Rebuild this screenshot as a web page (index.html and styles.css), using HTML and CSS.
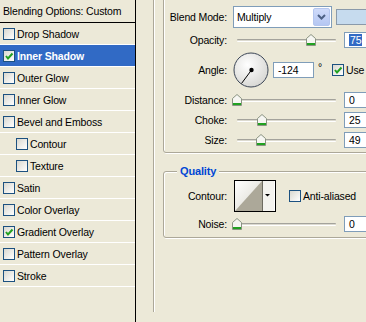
FILE: index.html
```html
<!DOCTYPE html>
<html>
<head>
<meta charset="utf-8">
<link rel="stylesheet" href="styles.css">
</head>
<body>
<div class="dialog">
  <aside class="styles-list">
    <div class="list-header">Blending Options: Custom</div>
    <div class="item"><span class="cb"></span>Drop Shadow</div>
    <div class="item selected"><span class="cb"><svg viewBox="0 0 10 10"><polyline points="2,5 4,7.5 8.5,2.5" fill="none" stroke="#21a121" stroke-width="2"/></svg></span>Inner Shadow</div>
    <div class="item"><span class="cb"></span>Outer Glow</div>
    <div class="item"><span class="cb"></span>Inner Glow</div>
    <div class="item"><span class="cb"></span>Bevel and Emboss</div>
    <div class="item sub"><span class="cb"></span>Contour</div>
    <div class="item sub"><span class="cb"></span>Texture</div>
    <div class="item"><span class="cb"></span>Satin</div>
    <div class="item"><span class="cb"></span>Color Overlay</div>
    <div class="item"><span class="cb"><svg viewBox="0 0 10 10"><polyline points="2,5 4,7.5 8.5,2.5" fill="none" stroke="#21a121" stroke-width="2"/></svg></span>Gradient Overlay</div>
    <div class="item"><span class="cb"></span>Pattern Overlay</div>
    <div class="item"><span class="cb"></span>Stroke</div>
  </aside>
  <main class="panel">
    <div class="outer-group">
      <section class="group structure">
        <div class="frow blend-row">
          <span class="lbl">Blend Mode:</span>
          <div class="select"><span>Multiply</span><span class="select-btn"><svg viewBox="0 0 15 16" width="15" height="16"><polyline points="4,6 7.5,9.5 11,6" fill="none" stroke="#4d6185" stroke-width="2"/></svg></span></div>
          <span class="swatch"></span>
        </div>
        <div class="frow slider-row">
          <span class="lbl">Opacity:</span>
          <div class="slider"><div class="track"></div><span class="thumb" style="left:73px"><svg viewBox="0 0 10 12" width="10" height="12"><path d="M0.5 11.5V4.5L5 0.5L9.5 4.5V11.5Z" fill="#f6f6f2" stroke="#8a9482"/><rect x="1" y="9" width="8" height="2" fill="#21a121"/></svg></span></div>
          <div class="num"><span class="hl">75</span></div>
        </div>
        <div class="frow angle-row">
          <span class="lbl">Angle:</span>
          <div class="angle-ctrl">
            <svg class="dial" viewBox="0 0 36 36" width="36" height="36"><defs><radialGradient id="dg" cx="40%" cy="35%" r="70%"><stop offset="0" stop-color="#ffffff"/><stop offset="1" stop-color="#d6d6d2"/></radialGradient></defs><circle cx="18" cy="18" r="17" fill="url(#dg)" stroke="#3c4656" stroke-width="1"/><line x1="18.5" y1="18" x2="8.5" y2="31.5" stroke="#000" stroke-width="1"/><circle cx="18.5" cy="18" r="2.2" fill="#000"/></svg>
            <div class="num angle-num">-124</div>
            <span class="deg">°</span>
            <span class="cb use-cb"><svg viewBox="0 0 10 10"><polyline points="2,5 4,7.5 8.5,2.5" fill="none" stroke="#21a121" stroke-width="2"/></svg></span>
            <span class="use-text">Use Global Light</span>
          </div>
        </div>
        <div class="frow slider-row">
          <span class="lbl">Distance:</span>
          <div class="slider"><div class="track"></div><span class="thumb" style="left:-1px"><svg viewBox="0 0 10 12" width="10" height="12"><path d="M0.5 11.5V4.5L5 0.5L9.5 4.5V11.5Z" fill="#f6f6f2" stroke="#8a9482"/><rect x="1" y="9" width="8" height="2" fill="#21a121"/></svg></span></div>
          <div class="num">0</div>
        </div>
        <div class="frow slider-row">
          <span class="lbl">Choke:</span>
          <div class="slider"><div class="track"></div><span class="thumb" style="left:24px"><svg viewBox="0 0 10 12" width="10" height="12"><path d="M0.5 11.5V4.5L5 0.5L9.5 4.5V11.5Z" fill="#f6f6f2" stroke="#8a9482"/><rect x="1" y="9" width="8" height="2" fill="#21a121"/></svg></span></div>
          <div class="num">25</div>
        </div>
        <div class="frow slider-row">
          <span class="lbl">Size:</span>
          <div class="slider"><div class="track"></div><span class="thumb" style="left:23px"><svg viewBox="0 0 10 12" width="10" height="12"><path d="M0.5 11.5V4.5L5 0.5L9.5 4.5V11.5Z" fill="#f6f6f2" stroke="#8a9482"/><rect x="1" y="9" width="8" height="2" fill="#21a121"/></svg></span></div>
          <div class="num">49</div>
        </div>
      </section>
      <section class="group quality">
        <span class="legend">Quality</span>
        <div class="frow contour-row">
          <span class="lbl">Contour:</span>
          <div class="contour-pick">
            <svg class="contour-prev" viewBox="0 0 28 30" width="28" height="30" preserveAspectRatio="none"><defs><linearGradient id="cg" x1="0" y1="0" x2="1" y2="1"><stop offset="0" stop-color="#ffffff"/><stop offset="1" stop-color="#d8d6cc"/></linearGradient></defs><rect width="28" height="30" fill="url(#cg)"/><polygon points="0,30 28,0 28,30" fill="#aca899"/></svg>
            <span class="contour-btn"><svg viewBox="0 0 11 30" width="11" height="30"><polygon points="2,13 7,13 4.5,15.5" fill="#000"/></svg></span>
          </div>
          <span class="cb aa-cb"></span>
          <span class="aa-text">Anti-aliased</span>
        </div>
        <div class="frow slider-row">
          <span class="lbl">Noise:</span>
          <div class="slider"><div class="track"></div><span class="thumb" style="left:-1px"><svg viewBox="0 0 10 12" width="10" height="12"><path d="M0.5 11.5V4.5L5 0.5L9.5 4.5V11.5Z" fill="#f6f6f2" stroke="#8a9482"/><rect x="1" y="9" width="8" height="2" fill="#21a121"/></svg></span></div>
          <div class="num">0</div>
        </div>
      </section>
    </div>
  </main>
</div>
</body>
</html>
```

FILE: styles.css
```css
* { box-sizing: border-box; }
html, body { margin: 0; }
body {
  width: 366px;
  height: 322px;
  overflow: hidden;
  background: #ece9d8;
  font: 10.5px "Liberation Sans", Arial, sans-serif;
  letter-spacing: -0.15px;
  color: #000;
}
.dialog { display: flex; height: 322px; }

.styles-list {
  width: 136px;
  flex: none;
  border-right: 1px solid #000;
}
.list-header {
  height: 23px;
  border-bottom: 1px solid #000;
  padding-left: 3px;
  line-height: 23px;
  white-space: nowrap;
}
.item {
  height: 22px;
  border-bottom: 1px solid #fff;
  display: flex;
  align-items: center;
  gap: 2px;
  padding-left: 3px;
  white-space: nowrap;
}
.item.sub { padding-left: 16px; }
.item.selected { background: #316ac5; color: #fff; font-weight: bold; }

.cb {
  width: 12px;
  height: 12px;
  flex: none;
  border: 1px solid #1c5180;
  background: linear-gradient(135deg, #d9d8d0, #ffffff);
  display: flex;
  align-items: center;
  justify-content: center;
}
.cb svg { width: 10px; height: 10px; display: block; }

.panel { flex: 1; padding-left: 17px; min-width: 0; }
.outer-group {
  height: 100%;
  border-left: 1px solid #aca899;
  box-shadow: inset 1px 0 #fff;
  padding-left: 9px;
}
.group {
  width: 260px;
  border: 1px solid #aca899;
  border-radius: 3px;
  box-shadow: 1px 1px 0 #fff, inset 1px 1px 0 #fff;
  display: flex;
  flex-direction: column;
  gap: 4px;
}
.structure { margin-top: -10px; padding: 15px 0 4px; }
.quality { margin-top: 18px; padding: 8px 0 5px; position: relative; }
.legend {
  position: absolute;
  top: -8px;
  left: 13px;
  padding: 0 3px;
  background: #ece9d8;
  color: #0046d5;
  font-weight: bold;
  font-size: 11px;
  line-height: 14px;
}

.frow { display: flex; align-items: center; gap: 6px; }
.lbl { width: 63px; flex: none; text-align: right; white-space: nowrap; }

.blend-row { height: 22px; }
.select {
  width: 99px;
  height: 22px;
  flex: none;
  border: 1px solid #7f9db9;
  background: #fff;
  display: flex;
  align-items: center;
  justify-content: space-between;
  padding: 1px 1px 1px 3px;
}
.select-btn {
  width: 17px;
  height: 18px;
  border: 1px solid #b4c6ef;
  border-radius: 2px;
  background: linear-gradient(#cfdbfa, #b5c7f2);
  display: flex;
  align-items: center;
  justify-content: center;
}
.select-btn svg { display: block; }
.swatch {
  width: 40px;
  height: 16px;
  flex: none;
  margin-left: -2px;
  border: 1px solid #8a9aaa;
  background: #c6dbee;
}

.slider-row { height: 16px; }
.slider { position: relative; width: 105px; height: 16px; flex: none; }
.track {
  position: absolute;
  left: 4px;
  right: 2px;
  top: 7px;
  height: 3px;
  border-radius: 1px;
  background: linear-gradient(#a4a39c 0 1px, #dcdad0 1px 2px, #ffffff 2px);
}
.thumb { position: absolute; top: 2px; width: 10px; height: 12px; }
.thumb svg { display: block; }

.num {
  width: 40px;
  height: 16px;
  flex: none;
  border: 1px solid #7f9db9;
  background: #fff;
  padding-left: 4px;
  line-height: 14px;
  white-space: nowrap;
}
.hl { background: #316ac5; color: #fff; padding: 0 1px; }

.angle-row { height: 36px; }
.angle-ctrl { display: flex; align-items: center; height: 36px; }
.dial { display: block; flex: none; }
.angle-num { width: 41px; margin-left: 4px; }
.deg { align-self: flex-start; margin-top: 9px; margin-left: 4px; line-height: 13px; }
.use-cb { margin-left: 10px; }
.use-text { margin-left: 2px; white-space: nowrap; }

.contour-row { height: 32px; }
.contour-pick {
  width: 42px;
  height: 32px;
  flex: none;
  margin-left: 1px;
  border: 1px solid #000;
  display: flex;
  background: #fff;
}
.contour-prev { display: block; border-right: 1px solid #6d6b60; }
.contour-btn { display: flex; background: #f4f3ee; }
.contour-btn svg { display: block; }
.aa-cb { margin-left: 7px; }
.aa-text { margin-left: -4px; white-space: nowrap; }
```
